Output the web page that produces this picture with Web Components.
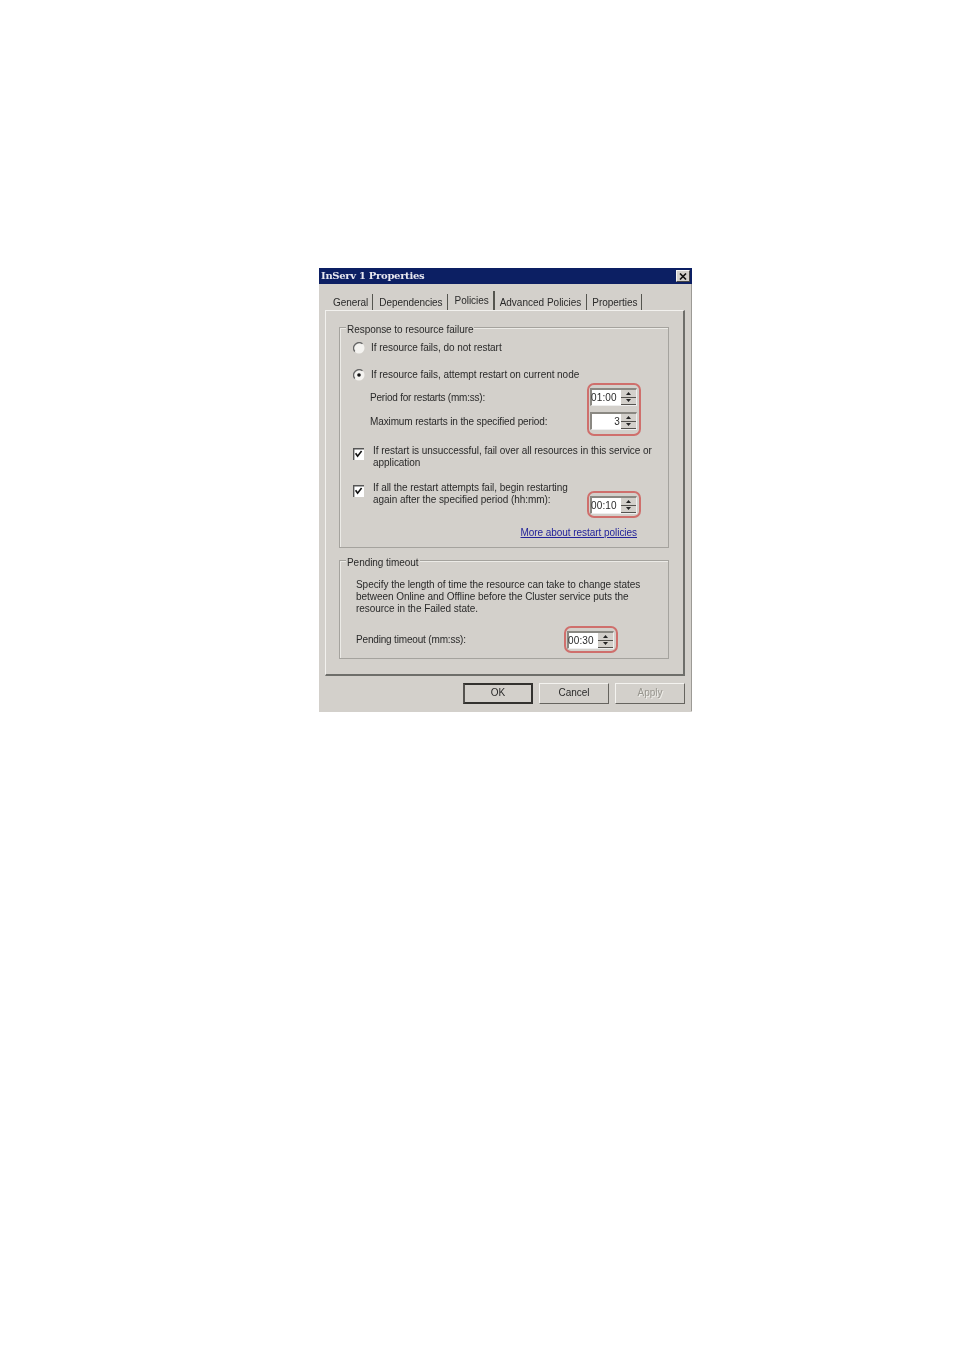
<!DOCTYPE html>
<html>
<head>
<meta charset="utf-8">
<style>
  html, body { margin: 0; background: #fff; }
  body { padding: 267px 0 0 319px; height: 1083px; font: 10px/12px "Liberation Sans", Arial, sans-serif; letter-spacing: -0.05px; color: #2a2a2a; }
</style>
</head>
<body>
<prop-dialog heading="InServ 1 Properties">
  <tab-strip slot="tabs">
    <tab-item>General</tab-item>
    <tab-item style="padding-left:6px">Dependencies</tab-item>
    <tab-item active>Policies</tab-item>
    <tab-item style="padding-right:5px;letter-spacing:0">Advanced Policies</tab-item>
    <tab-item>Properties</tab-item>
  </tab-strip>

  <group-box legend="Response to resource failure" style="height:221px">
    <div style="display:flex;flex-direction:column;padding:13px 31px 0 13px">
      <radio-option>If resource fails, do not restart</radio-option>
      <radio-option checked style="margin-top:13px">If resource fails, attempt restart on current node</radio-option>
      <div style="display:flex;justify-content:space-between;margin-top:6px">
        <div style="display:flex;flex-direction:column;gap:4px;padding-left:17px">
          <div style="height:20px;line-height:20px;letter-spacing:-0.22px">Period for restarts (mm:ss):</div>
          <div style="height:20px;line-height:20px;letter-spacing:-0.12px">Maximum restarts in the specified period:</div>
        </div>
        <red-ring>
          <div style="display:flex;flex-direction:column;gap:6px">
            <spin-box>01:00</spin-box>
            <spin-box right>3</spin-box>
          </div>
        </red-ring>
      </div>
      <check-option style="margin-top:13px;margin-right:-30px;white-space:nowrap">If restart is unsuccessful, fail over all resources in this service or<br>application</check-option>
      <div style="display:flex;justify-content:space-between;margin-top:13px;height:32px">
        <check-option>If all the restart attempts fail, begin restarting<br>again after the specified period (hh:mm):</check-option>
        <red-ring style="align-self:flex-end"><spin-box>00:10</spin-box></red-ring>
      </div>
      <a href="#" style="align-self:flex-end;margin-top:12px;color:#23239a;text-decoration:underline;line-height:14px">More about restart policies</a>
    </div>
  </group-box>

  <group-box legend="Pending timeout" style="height:99px;margin-top:12px">
    <div style="padding:18px 20px 0 16px">
      <div>Specify the length of time the resource can take to change states<br>between Online and Offline before the Cluster service puts the<br>resource in the Failed state.</div>
      <div style="display:flex;justify-content:space-between;align-items:center;margin-top:16px;padding-right:34px">
        <span style="letter-spacing:-0.17px">Pending timeout (mm:ss):</span>
        <red-ring><spin-box>00:30</spin-box></red-ring>
      </div>
    </div>
  </group-box>

  <dlg-button slot="buttons" default>OK</dlg-button>
  <dlg-button slot="buttons">Cancel</dlg-button>
  <dlg-button slot="buttons" disabled>Apply</dlg-button>
</prop-dialog>

<script>
  // small helper, every element gets the same open shadow setup
  function shadow(el, html) {
    el.attachShadow({ mode: 'open' });
    el.shadowRoot.innerHTML = html;
  }

  customElements.define('prop-dialog', class extends HTMLElement {
    connectedCallback() {
      shadow(this, `
<style>
  :host { display: block; width: 373px; height: 444px; background: #d3d0cb; box-sizing: border-box; filter: blur(0.45px); }
  .title { height: 16px; margin-top: 1px; background: #0c1f63; color: #e8e8f0; display: flex; align-items: center; justify-content: space-between; padding: 0 2px; }
  .title b { font: bold 10px "DejaVu Serif", serif; letter-spacing: -0.3px; margin-top: -2px; }
  .close { width: 14px; height: 12px; background: #d3d0cb; border: 1px solid; border-color: #f4f4f4 #444 #444 #f4f4f4; box-sizing: border-box; display: flex; align-items: center; justify-content: center; }
  .body { border-right: 1px solid #9c9a95; height: 427px; box-sizing: border-box; }
  .tabs { padding: 7px 0 0 9px; height: 19px; }
  .panel { margin: 0 6px 0 6px; height: 366px; box-sizing: border-box; border-top: 1px solid #f2f1ee; border-left: 1px solid #f2f1ee; border-right: 2px solid #6e6e6a; border-bottom: 2px solid #6e6e6a; padding: 16px 14px 0 13px; }
  .buttons { display: flex; justify-content: flex-end; gap: 6px; padding: 7px 6px 0 0; }
</style>
<div class="title"><b>${this.getAttribute('heading')}</b>
  <span class="close"><svg width="8" height="7" viewBox="0 0 8 7"><path d="M1 0.5 7 6.5M7 0.5 1 6.5" stroke="#111" stroke-width="1.6"/></svg></span>
</div>
<div class="body">
  <div class="tabs"><slot name="tabs"></slot></div>
  <div class="panel"><slot></slot></div>
  <div class="buttons"><slot name="buttons"></slot></div>
</div>`);
    }
  });

  customElements.define('tab-strip', class extends HTMLElement {
    connectedCallback() {
      shadow(this, `<style>:host { display: flex; align-items: flex-end; height: 19px; }</style><slot></slot>`);
    }
  });

  customElements.define('tab-item', class extends HTMLElement {
    connectedCallback() {
      shadow(this, `
<style>
  :host { display: block; height: 16px; line-height: 17px; padding: 0 4px 0 5px; border-right: 1px solid #55554f; }
  :host([active]) { height: 19px; line-height: 20px; padding: 0 4px 0 7px; border-right-width: 2px; box-sizing: border-box; }
</style>
<slot></slot>`);
    }
  });

  customElements.define('group-box', class extends HTMLElement {
    connectedCallback() {
      shadow(this, `
<style>
  :host { display: block; position: relative; box-sizing: border-box; border: 1px solid #a5a39e; box-shadow: inset 1px 1px 0 #ecebe7; }
  .legend { position: absolute; left: 6px; top: -5px; padding: 0 1px; background: #d3d0cb; line-height: 13px; }
</style>
<span class="legend">${this.getAttribute('legend')}</span>
<slot></slot>`);
    }
  });

  customElements.define('radio-option', class extends HTMLElement {
    connectedCallback() {
      const dot = this.hasAttribute('checked') ? '<circle cx="6" cy="6" r="1.8" fill="#111"/>' : '';
      shadow(this, `
<style>
  :host { display: flex; align-items: center; gap: 6px; height: 14px; }
  svg { flex: none; }
</style>
<svg width="12" height="12" viewBox="0 0 12 12">
  <circle cx="6" cy="6" r="5.5" fill="#f4f3f0"/>
  <path d="M1.8 9.5A5.5 5.5 0 0 1 9.5 1.8" fill="none" stroke="#666" stroke-width="1.3"/>
  ${dot}
</svg>
<span><slot></slot></span>`);
    }
  });

  customElements.define('check-option', class extends HTMLElement {
    connectedCallback() {
      shadow(this, `
<style>
  :host { display: flex; align-items: flex-start; gap: 9px; }
  svg { flex: none; margin-top: 3px; }
</style>
<svg width="11" height="12" viewBox="0 0 11 12">
  <rect width="11" height="12" fill="#fff"/>
  <path d="M0.7 12V0.7H11" fill="none" stroke="#555" stroke-width="1.4"/>
  <path d="M2.6 5.2 4.6 8.2 8.6 3" fill="none" stroke="#111" stroke-width="1.6"/>
</svg>
<span><slot></slot></span>`);
    }
  });

  customElements.define('spin-box', class extends HTMLElement {
    connectedCallback() {
      shadow(this, `
<style>
  :host { display: flex; width: 47px; height: 18px; box-sizing: border-box; background: #fff; border-top: 2px solid #8a8882; border-left: 2px solid #8a8882; border-right: 1px solid #eee; border-bottom: 1px solid #eee; }
  .val { flex: 1; line-height: 15px; margin-left: -1px; letter-spacing: 0.15px; }
  :host([right]) .val { text-align: right; padding-right: 1px; }
  .btns { width: 15px; flex: none; background: #d3d0cb; display: flex; flex-direction: column; }
  .btns span { flex: 1; display: flex; align-items: center; justify-content: center; border-bottom: 1px solid #55534f; }
</style>
<div class="val"><slot></slot></div>
<div class="btns">
  <span><svg width="5" height="3" viewBox="0 0 5 3"><path d="M2.5 0 5 3H0Z" fill="#222"/></svg></span>
  <span><svg width="5" height="3" viewBox="0 0 5 3"><path d="M2.5 3 5 0H0Z" fill="#222"/></svg></span>
</div>`);
    }
  });

  customElements.define('red-ring', class extends HTMLElement {
    connectedCallback() {
      shadow(this, `
<style>
  :host { display: block; position: relative; }
  .ring { position: absolute; inset: -5px -4px -4px -3px; border: 2px solid #cf6f6c; border-radius: 7px; pointer-events: none; }
</style>
<slot></slot><span class="ring"></span>`);
    }
  });

  customElements.define('dlg-button', class extends HTMLElement {
    connectedCallback() {
      shadow(this, `
<style>
  :host { display: block; width: 70px; height: 21px; box-sizing: border-box; line-height: 18px; text-align: center; border: 1px solid; border-color: #f4f3f0 #66645f #66645f #f4f3f0; }
  :host([default]) { border: 2px solid; border-color: #33322f #33322f #33322f #55534f; line-height: 16px; }
  :host([disabled]) { color: #98968f; text-shadow: 1px 1px 0 #f1f0ec; }
</style>
<slot></slot>`);
    }
  });
</script>
</body>
</html>
